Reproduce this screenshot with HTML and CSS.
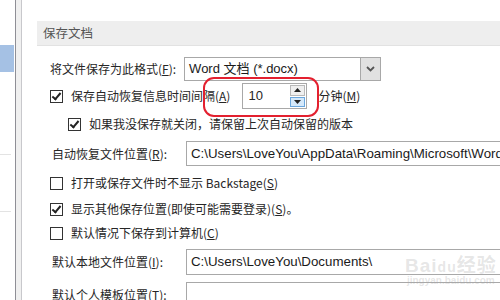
FILE: index.html
```html
<!DOCTYPE html>
<html lang="zh-CN">
<head>
    <meta charset="UTF-8">
    <title>Word 选项 - 保存</title>
    <link rel="stylesheet" href="styles.css">
</head>
<body>
    <div class="nav">
        <div class="nav-selected"></div>
        <div class="nav-rule rule-1"></div>
        <div class="nav-rule rule-2"></div>
    </div>
    <div class="splitter"></div>
    <main class="options">
        <div class="section-title">保存文档</div>

        <div class="row row-format">
            <span class="label">将文件保存为此格式(<u>F</u>):</span>
            <div class="select">
                <span class="select-text">Word 文档 (*.docx)</span>
                <span class="select-btn">
                    <svg width="9" height="6" viewBox="0 0 9 6"><path d="M1 1 L4.5 4.5 L8 1" fill="none" stroke="#555" stroke-width="1.8"/></svg>
                </span>
            </div>
        </div>

        <div class="row row-autosave">
            <span class="check checked"></span>
            <span class="label">保存自动恢复信息时间间隔(<u>A</u>)</span>
            <div class="spin">
                <span class="spin-value">10</span>
                <div class="spin-btns">
                    <span class="spin-up"><svg width="7" height="4" viewBox="0 0 7 4"><path d="M0 4 L3.5 0 L7 4 Z" fill="#222"/></svg></span>
                    <span class="spin-down"><svg width="7" height="4" viewBox="0 0 7 4"><path d="M0 0 L3.5 4 L7 0 Z" fill="#222"/></svg></span>
                </div>
            </div>
            <span class="label minutes">分钟(<u>M</u>)</span>
        </div>

        <div class="row row-keep">
            <span class="check checked"></span>
            <span class="label">如果我没保存就关闭，请保留上次自动保留的版本</span>
        </div>

        <div class="row row-path row-recover">
            <span class="label path-label">自动恢复文件位置(<u>R</u>):</span>
            <div class="path-box">C:\Users\LoveYou\AppData\Roaming\Microsoft\Word\</div>
        </div>

        <div class="row row-backstage">
            <span class="check"></span>
            <span class="label">打开或保存文件时不显示 Backstage(<u>S</u>)</span>
        </div>

        <div class="row row-show">
            <span class="check checked"></span>
            <span class="label">显示其他保存位置(即使可能需要登录)(<u>S</u>)。</span>
        </div>

        <div class="row row-computer">
            <span class="check"></span>
            <span class="label">默认情况下保存到计算机(<u>C</u>)</span>
        </div>

        <div class="row row-path row-local">
            <span class="label path-label">默认本地文件位置(<u>I</u>):</span>
            <div class="path-box">C:\Users\LoveYou\Documents\</div>
        </div>

        <div class="row row-path row-template">
            <span class="label path-label">默认个人模板位置(<u>T</u>):</span>
            <div class="path-box"></div>
        </div>

        <!-- red annotation ring drawn on top of the screenshot -->
        <div class="mark"></div>
        <div class="watermark">
            <span class="wm-logo">Bai<span class="wm-du">du</span>经验</span>
            <span class="wm-url">jingyan.baidu.com</span>
        </div>
    </main>
</body>
</html>
```

FILE: styles.css
```css
html, body {
    margin: 0;
    padding: 0;
}

body {
    width: 500px;
    height: 300px;
    overflow: hidden;
    display: flex;
    background: #ffffff;
    font-family: "Noto Sans CJK SC", "Liberation Sans", sans-serif;
    font-size: 12px;
    color: #262626;
}

u {
    text-decoration: underline;
    text-underline-offset: 1px;
}

/* left navigation strip */
.nav {
    width: 15px;
    flex: none;
    display: flex;
    flex-direction: column;
}

.nav-selected {
    margin-top: 45px;
    width: 14px;
    height: 27px;
    background: #a5c1e4;
}

.nav-rule {
    width: 11px;
    height: 1px;
    background: #e3e3e3;
}

.rule-1 {
    margin-top: 82px;
}

.rule-2 {
    margin-top: 56px;
}

.splitter {
    width: 5px;
    flex: none;
    background: #f0f0f0;
    border-left: 1px solid #8f8f96;
    border-right: 1px solid #c8c8cc;
}

/* options pane */
.options {
    position: relative;
    flex: 1;
    padding-left: 15px;
    display: flex;
    flex-direction: column;
}

.section-title {
    flex: none;
    margin-top: 21px;
    height: 24px;
    line-height: 24px;
    padding-left: 6px;
    background: #eeeeee;
    border-bottom: 1px solid #e2e2e2;
    color: #555555;
    font-size: 12.5px;
}

.row {
    flex: none;
    display: flex;
    align-items: center;
    padding-left: 13px;
    white-space: nowrap;
}

.label {
    line-height: 16px;
}

.check {
    width: 11px;
    height: 11px;
    flex: none;
    border: 1px solid #333333;
    background: #ffffff;
    margin-right: 8px;
    position: relative;
}

.check.checked::after {
    content: "";
    position: absolute;
    left: 3px;
    top: 0px;
    width: 3px;
    height: 7px;
    border-right: 2px solid #222;
    border-bottom: 2px solid #222;
    transform: rotate(40deg);
}

.row-format {
    margin-top: 11px;
    height: 24px;
}

.select {
    margin-left: 8px;
    width: 195px;
    height: 22px;
    border: 1px solid #a8a8a8;
    display: flex;
    align-items: stretch;
}

.select-text {
    flex: 1;
    padding-left: 4px;
    line-height: 22px;
    font-family: "Liberation Sans", "Noto Sans CJK SC", sans-serif;
    font-size: 13px;
    color: #1a1a1a;
}

.select-btn {
    width: 19px;
    background: #e1e1e1;
    border-left: 1px solid #a8a8a8;
    display: flex;
    align-items: center;
    justify-content: center;
}

.row-autosave {
    margin-top: 2px;
    height: 26px;
}

.spin {
    margin-left: 12px;
    width: 63px;
    height: 24px;
    border: 1px solid #a8a8a8;
    display: flex;
}

.spin-value {
    flex: 1;
    padding-left: 5px;
    line-height: 24px;
    font-family: "Liberation Sans", sans-serif;
    font-size: 13px;
}

.spin-btns {
    width: 15px;
    margin: 1px;
    display: flex;
    flex-direction: column;
    gap: 1px;
}

.spin-up,
.spin-down {
    flex: 1;
    display: flex;
    align-items: center;
    justify-content: center;
    border: 1px solid #b9b9b9;
    background: #efefef;
}

.spin-down {
    background: #d4e8fa;
    border-color: #6aa6dd;
}

.minutes {
    margin-left: 11px;
}

.row-keep {
    margin-top: 4px;
    height: 22px;
    padding-left: 31px;
}

.row-path {
    height: 25px;
    padding-left: 15px;
}

.path-label {
    width: 134px;
    flex: none;
}

.path-box {
    flex: 1;
    height: 100%;
    box-sizing: border-box;
    border: 1px solid #a8a8a8;
    border-right: none;
    padding-left: 4px;
    line-height: 23px;
    font-family: "Liberation Sans", sans-serif;
    font-size: 13.3px;
    color: #1a1a1a;
    overflow: hidden;
}

.row-recover {
    margin-top: 6px;
}

.row-backstage {
    margin-top: 6px;
    height: 22px;
}

.row-show {
    margin-top: 4px;
    height: 22px;
}

.row-computer {
    margin-top: 2px;
    height: 22px;
}

.row-local {
    margin-top: 5px;
    height: 26px;
}

.row-template {
    margin-top: 7px;
    height: 26px;
}

.mark {
    position: absolute;
    left: 181px;
    top: 77px;
    width: 112px;
    height: 36px;
    border: 2px solid #e3202f;
    border-radius: 11px;
    pointer-events: none;
}

.watermark {
    position: absolute;
    left: 383px;
    top: 250px;
    display: flex;
    flex-direction: column;
    align-items: center;
    color: rgba(170, 170, 170, 0.3);
    font-family: "Liberation Sans", "Noto Sans CJK SC", sans-serif;
    font-weight: bold;
}

.wm-logo {
    font-size: 19px;
    letter-spacing: 1px;
}

.wm-du {
    font-size: 14px;
}

.wm-url {
    font-size: 10px;
    margin-top: -2px;
}
```
